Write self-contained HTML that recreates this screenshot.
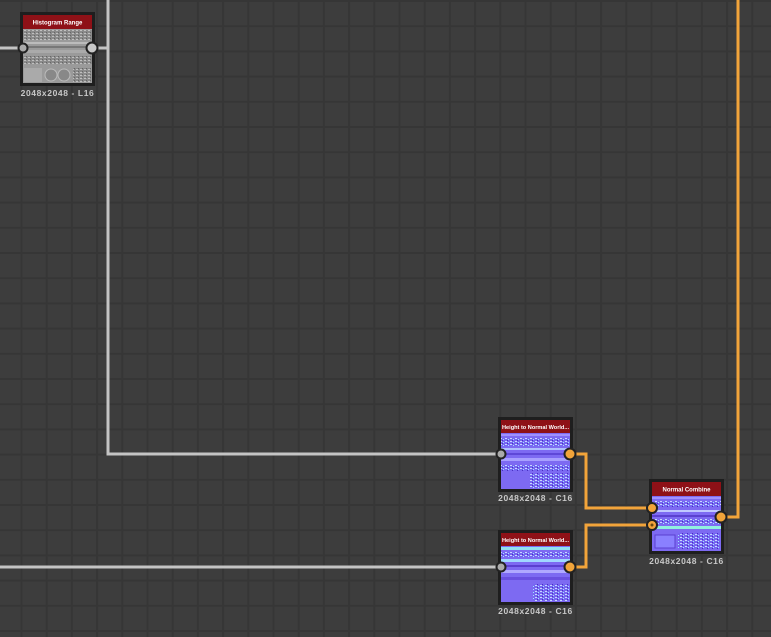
<!DOCTYPE html>
<html><head><meta charset="utf-8"><style>
html,body{margin:0;padding:0;background:#3c3c3c;}
svg{display:block}
text{font-family:"Liberation Sans",sans-serif;}
</style></head><body>
<svg width="771" height="637" viewBox="0 0 771 637" xmlns="http://www.w3.org/2000/svg">
<defs>
<pattern id="grid" x="20.5" y="0" width="25.2" height="25.2" patternUnits="userSpaceOnUse">
<rect width="25.2" height="25.2" fill="#3d3d3d"/>
<rect x="0" y="0" width="25.2" height="2" fill="#363636"/>
<rect x="0" y="0" width="2" height="25.2" fill="#363636"/>
</pattern>
<pattern id="dots" width="5" height="3" patternUnits="userSpaceOnUse">
<rect width="5" height="3" fill="#7766f2"/>
<rect x="0" y="0" width="2" height="1" fill="#c8d8ff"/>
<rect x="3" y="1" width="1" height="1" fill="#9fe8ff"/>
<rect x="2" y="2" width="1" height="1" fill="#4a30c0"/>
</pattern>
<pattern id="gdots" width="4" height="3" patternUnits="userSpaceOnUse">
<rect width="4" height="3" fill="#8a8a8a"/>
<rect x="0" y="0" width="2" height="1" fill="#c0c0c0"/>
<rect x="2" y="2" width="1" height="1" fill="#666"/>
</pattern>
</defs>
<rect width="771" height="637" fill="url(#grid)"/>

<g stroke="#c4c4c4" stroke-width="3" fill="none">
<path d="M0 48 H22"/>
<path d="M93 48 H108 V454 H501" />
<path d="M108 0 V48"/>
<path d="M0 567 H501"/>
</g>
<g stroke="#f2a43a" stroke-width="3" fill="none">
<path d="M570 454 H586 V508 H652"/>
<path d="M570 567 H586 V525 H652"/>
<path d="M721 517 H738 V0"/>
</g>

<g>
<rect x="20" y="12" width="75" height="74" fill="#1e1e1e"/>
<rect x="23" y="15" width="69" height="68" fill="#9a9a9a"/>
<rect x="23" y="15" width="69" height="14" fill="#8e1117"/>
<text x="57.5" y="24.5" font-size="6" fill="#fff" text-anchor="middle" font-weight="bold">Histogram Range</text>
<rect x="23" y="30" width="69" height="10" fill="url(#gdots)"/>
<rect x="23" y="42" width="69" height="2" fill="#bbb"/>
<rect x="23" y="46" width="69" height="2" fill="#777"/>
<rect x="23" y="50" width="69" height="3" fill="#aaa"/>
<rect x="23" y="56" width="69" height="8" fill="url(#gdots)"/>
<rect x="24" y="68" width="18" height="14" fill="#aaa"/>
<circle cx="51" cy="75" r="6" fill="#888" stroke="#bbb"/>
<circle cx="64" cy="75" r="6" fill="#888" stroke="#bbb"/>
<rect x="73" y="68" width="18" height="14" fill="url(#gdots)"/>
<text x="57.5" y="96" font-size="8.5" letter-spacing="0.6" fill="#c8c8c8" text-anchor="middle" font-weight="bold">2048x2048 - L16</text>
<circle cx="23" cy="48" r="4.5" fill="#aaa" stroke="#222" stroke-width="2"/>
<circle cx="92" cy="48" r="5.5" fill="#c8c8c8" stroke="#222" stroke-width="2"/>
</g>

<g>
<rect x="498" y="417" width="75" height="75" fill="#1e1e1e"/>
<rect x="501" y="420" width="69" height="69" fill="#7d6af2"/>
<rect x="501" y="420" width="69" height="13" fill="#8e1117"/>
<text x="535.5" y="429" font-size="5.6" fill="#fff" text-anchor="middle" font-weight="bold">Height to Normal World...</text>
<rect x="501" y="434" width="69" height="2" fill="#a090ff"/>
<rect x="501" y="438" width="69" height="8" fill="url(#dots)"/>
<rect x="501" y="448" width="69" height="2" fill="#b0c0ff"/>
<rect x="501" y="453" width="69" height="2" fill="#5e48d8"/>
<rect x="501" y="458" width="69" height="3" fill="#a8a0ff"/>
<rect x="501" y="465" width="69" height="6" fill="url(#dots)"/>
<rect x="530" y="473" width="40" height="15" fill="url(#dots)"/>
<text x="535.5" y="501" font-size="8.5" letter-spacing="0.6" fill="#c8c8c8" text-anchor="middle" font-weight="bold">2048x2048 - C16</text>
<circle cx="501" cy="454" r="4.5" fill="#aaa" stroke="#222" stroke-width="2"/>
<circle cx="570" cy="454" r="5.5" fill="#f2a43a" stroke="#222" stroke-width="2"/>
</g>

<g>
<rect x="498" y="530" width="75" height="75" fill="#1e1e1e"/>
<rect x="501" y="533" width="69" height="69" fill="#7d6af2"/>
<rect x="501" y="533" width="69" height="13" fill="#8e1117"/>
<text x="535.5" y="542" font-size="5.6" fill="#fff" text-anchor="middle" font-weight="bold">Height to Normal World...</text>
<rect x="501" y="547" width="69" height="3" fill="#90e0f0"/>
<rect x="501" y="552" width="69" height="5" fill="url(#dots)"/>
<rect x="501" y="559" width="69" height="3" fill="#a0d8ff"/>
<rect x="501" y="565" width="69" height="2" fill="#5a40d0"/>
<rect x="501" y="570" width="69" height="3" fill="#b0a8ff"/>
<rect x="501" y="577" width="69" height="3" fill="#6a50e0"/>
<rect x="533" y="584" width="37" height="17" fill="url(#dots)"/>
<text x="535.5" y="614" font-size="8.5" letter-spacing="0.6" fill="#c8c8c8" text-anchor="middle" font-weight="bold">2048x2048 - C16</text>
<circle cx="501" cy="567" r="4.5" fill="#aaa" stroke="#222" stroke-width="2"/>
<circle cx="570" cy="567" r="5.5" fill="#f2a43a" stroke="#222" stroke-width="2"/>
</g>

<g>
<rect x="649" y="479" width="75" height="75" fill="#1e1e1e"/>
<rect x="652" y="482" width="69" height="69" fill="#7d6af2"/>
<rect x="652" y="482" width="69" height="14" fill="#8e1117"/>
<text x="686.5" y="491.5" font-size="6" fill="#fff" text-anchor="middle" font-weight="bold">Normal Combine</text>
<rect x="652" y="497" width="69" height="2" fill="#a090ff"/>
<rect x="652" y="501" width="69" height="6" fill="url(#dots)"/>
<rect x="652" y="510" width="69" height="2" fill="#c0c8ff"/>
<rect x="652" y="515" width="69" height="2" fill="#5a40d0"/>
<rect x="652" y="519" width="69" height="5" fill="url(#dots)"/>
<rect x="652" y="526" width="69" height="3" fill="#90f0e0"/>
<rect x="655" y="535" width="20" height="13" fill="#8a80ff" stroke="#5a40d0"/>
<rect x="678" y="533" width="42" height="16" fill="url(#dots)"/>
<text x="686.5" y="564" font-size="8.5" letter-spacing="0.6" fill="#c8c8c8" text-anchor="middle" font-weight="bold">2048x2048 - C16</text>
<circle cx="652" cy="508" r="5" fill="#f2a43a" stroke="#222" stroke-width="2"/>
<circle cx="652" cy="525" r="5" fill="#f2a43a" stroke="#222" stroke-width="2"/>
<circle cx="652" cy="525" r="1.5" fill="#6a4a10"/>
<circle cx="721" cy="517" r="5.5" fill="#f2a43a" stroke="#222" stroke-width="2"/>
</g>
</svg>
</body></html>
